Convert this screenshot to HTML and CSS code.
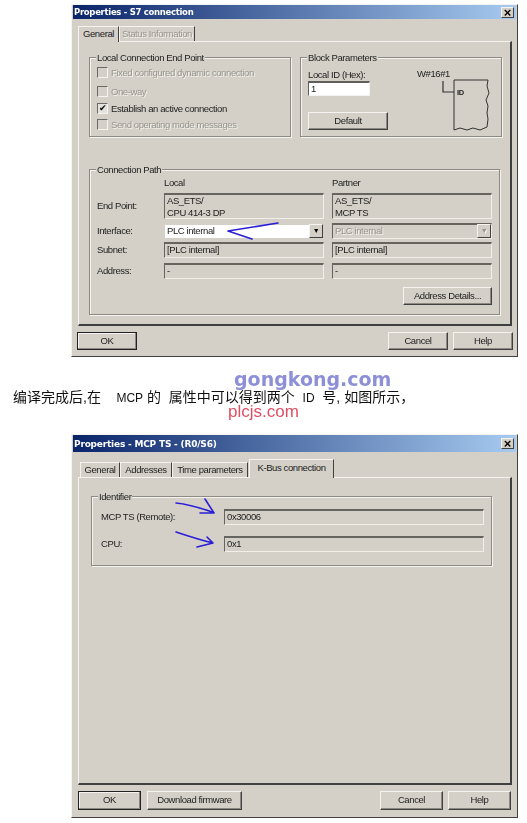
FILE: index.html
```html
<!DOCTYPE html>
<html lang="en">
<head>
  <meta charset="UTF-8" />
  <title>Properties</title>
  <link rel="stylesheet" href="styles.css">
</head>
<body>
  <div class="page">

    <div class="dialog dialog-s7">
      <div class="titlebar">
        <span>Properties - S7 connection</span>
        <span class="close">×</span>
      </div>
      <div class="tabs">
        <div class="tab active">General</div>
        <div class="tab off">Status Information</div>
      </div>
      <div class="panel">
        <div class="top-groups">
          <div class="group end-point">
            <div class="legend">Local Connection End Point</div>
            <div class="check off"><span class="box"></span>Fixed configured dynamic connection</div>
            <div class="check off"><span class="box"></span>One-way</div>
            <div class="check"><span class="box">✔</span>Establish an active connection</div>
            <div class="check off"><span class="box"></span>Send operating mode messages</div>
          </div>
          <div class="group block-params">
            <div class="legend">Block Parameters</div>
            <div class="block-body">
              <div class="block-form">
                <div class="block-label">Local ID (Hex):</div>
                <div class="input">1</div>
                <div class="btn default-btn">Default</div>
              </div>
              <svg class="block-pic" width="80" height="68" viewBox="0 0 80 68">
                <text x="1" y="12" class="pic-text">W#16#1</text>
                <path d="M27 16V27H38" class="pic-line" />
                <path d="M38 15H72L71 21L73 28L70 35L72 41L71 48L72 54L71 62L64 65L57 63L51 65L44 63L38 65Z" class="pic-line thin" />
                <text x="41" y="30" class="pic-text small">ID</text>
              </svg>
            </div>
          </div>
        </div>
        <div class="group path">
          <div class="legend">Connection Path</div>
          <div class="path-grid">
            <div></div>
            <div class="col-head">Local</div>
            <div class="col-head">Partner</div>

            <div class="row-label tall">End Point:</div>
            <div class="field tall">AS_ETS/<br>CPU 414-3 DP</div>
            <div class="field tall">AS_ETS/<br>MCP TS</div>

            <div class="row-label">Interface:</div>
            <div class="field white">PLC internal<span class="drop">▼</span></div>
            <div class="field off">PLC internal<span class="drop">▼</span></div>

            <div class="row-label">Subnet:</div>
            <div class="field">[PLC internal]</div>
            <div class="field">[PLC internal]</div>

            <div class="row-label">Address:</div>
            <div class="field">-</div>
            <div class="field">-</div>
          </div>
          <div class="btn details-btn">Address Details...</div>
        </div>
      </div>
      <div class="actions">
        <div class="btn primary">OK</div>
        <div class="spacer"></div>
        <div class="btn">Cancel</div>
        <div class="btn">Help</div>
      </div>
    </div>

    <p class="caption">编译完成后,在    <span class="latin">MCP</span> 的  属性中可以得到两个  <span class="latin">ID</span>  号, 如图所示，</p>

    <div class="dialog dialog-mcp">
      <div class="titlebar">
        <span>Properties - MCP TS - (R0/S6)</span>
        <span class="close">×</span>
      </div>
      <div class="tabs">
        <div class="tab">General</div>
        <div class="tab">Addresses</div>
        <div class="tab">Time parameters</div>
        <div class="tab active">K-Bus connection</div>
      </div>
      <div class="panel">
        <div class="group identifier">
          <div class="legend">Identifier</div>
          <div class="id-grid">
            <div class="row-label">MCP TS (Remote):</div>
            <div class="field">0x30006</div>
            <div class="row-label">CPU:</div>
            <div class="field">0x1</div>
          </div>
        </div>
      </div>
      <div class="actions">
        <div class="btn primary">OK</div>
        <div class="btn download">Download firmware</div>
        <div class="spacer"></div>
        <div class="btn">Cancel</div>
        <div class="btn">Help</div>
      </div>
    </div>

    <svg class="marks" width="527" height="823" viewBox="0 0 527 823">
      <path d="M278 223L228 231L252 239" />
      <path d="M176 503C186 504 198 507 212 512M205 499L214 513L200 513" />
      <path d="M176 532C188 536 200 540 213 543M197 547L213 543L207 537" />
    </svg>
    <div class="mark-gongkong">gongkong.com</div>
    <div class="mark-plcjs">plcjs.com</div>
  </div>
</body>
</html>
```

FILE: styles.css
```css
body {
  margin: 0;
  background-color: #fff;
  font-family: 'Liberation Sans', sans-serif;
  font-size: 9.5px;
  letter-spacing: -0.4px;
  color: #222;
}

.page {
  position: relative;
  width: 527px;
  height: 823px;
  overflow: hidden;
  padding-top: 4px;
  box-sizing: border-box;
  filter: blur(0.35px);
}

.dialog {
  width: 447px;
  margin-left: 71px;
  box-sizing: border-box;
  background-color: #d4d0c8;
  border: 1px solid #f4f3ef;
  border-right-color: #404040;
  border-bottom-color: #404040;
  padding: 0 1px;
}

.dialog-s7 {
  height: 353px;
}

.dialog-mcp {
  height: 384px;
}

.titlebar {
  height: 14px;
  padding: 0 1px;
  display: flex;
  justify-content: space-between;
  align-items: center;
  background: linear-gradient(90deg, #0a246a, #a6caf0);
  color: #fff;
  font-family: 'DejaVu Sans', sans-serif;
  font-weight: bold;
  font-size: 8.5px;
  letter-spacing: -0.3px;
}

.dialog-mcp .titlebar {
  height: 17px;
  font-size: 9px;
  letter-spacing: -0.2px;
}

.close {
  width: 13px;
  height: 11px;
  margin-right: 1px;
  background-color: #d4d0c8;
  border: 1px solid #f4f3ef;
  border-right-color: #404040;
  border-bottom-color: #404040;
  box-sizing: border-box;
  color: #000;
  font-family: 'Liberation Sans', sans-serif;
  font-size: 13px;
  letter-spacing: 0;
  line-height: 9px;
  text-align: center;
}

/* tabs */
.tabs {
  display: flex;
  height: 16px;
  margin-top: 6px;
  padding-left: 5px;
  align-items: flex-end;
}

.dialog-mcp .tabs {
  height: 18px;
  margin-top: 7px;
  padding-left: 7px;
}

.tab {
  height: 15px;
  line-height: 14px;
  box-sizing: border-box;
  white-space: nowrap;
  text-align: center;
  border-top: 1px solid #f4f3ef;
  border-left: 1px solid #f4f3ef;
  border-right: 1px solid #404040;
}

.tab.active {
  height: 16px;
  position: relative;
  z-index: 1;
  background-color: #d4d0c8;
  margin-bottom: -1px;
}

.dialog-mcp .tab.active {
  height: 19px;
  line-height: 15px;
  margin-left: 1px;
}

.dialog-s7 .tab.active {
  width: 41px;
}

.dialog-s7 .tab.off {
  width: 76px;
}

.dialog-mcp .tab:nth-child(1) {
  width: 40px;
}

.dialog-mcp .tab:nth-child(2) {
  width: 52px;
}

.dialog-mcp .tab:nth-child(3) {
  width: 76px;
}

.dialog-mcp .tab:nth-child(4) {
  width: 85px;
}

.off {
  color: #98958d;
  text-shadow: 1px 1px 0 #f4f3ef;
}

.panel {
  height: 285px;
  margin-left: 5px;
  width: 434px;
  box-sizing: border-box;
  padding: 15px 10px 0;
  border: 1px solid #f4f3ef;
  border-right: 2px solid #404040;
  border-bottom: 2px solid #404040;
}

.dialog-mcp .panel {
  height: 308px;
  padding: 18px 18px 0 12px;
}

/* groups */
.group {
  box-sizing: border-box;
  border: 1px solid #8d8a83;
  box-shadow: 1px 1px 0 #f4f3ef, inset 1px 1px 0 #f4f3ef;
}

.legend {
  display: table;
  height: 13px;
  line-height: 13px;
  margin: -7px 0 0 6px;
  padding: 0 1px;
  background-color: #d4d0c8;
}

.end-point .legend {
  margin-left: -1px;
}

.top-groups {
  display: grid;
  grid-template-columns: 202px 202px;
  column-gap: 9px;
  height: 80px;
  margin-bottom: 32px;
}

.end-point {
  padding-left: 7px;
}

.check {
  display: flex;
  align-items: center;
  height: 16px;
  white-space: nowrap;
}

.check:nth-child(3) {
  margin-top: 3px;
}

.check:nth-child(4) {
  margin-top: 1px;
}

.box {
  width: 11px;
  height: 11px;
  margin-right: 3px;
  box-sizing: border-box;
  border: 1px solid #6c6a65;
  border-right-color: #f4f3ef;
  border-bottom-color: #f4f3ef;
  background-color: #e4e2dc;
  font-size: 9px;
  line-height: 9px;
  color: #000;
  text-align: center;
  overflow: hidden;
}

.off .box {
  background-color: #d4d0c8;
}

/* block parameters */
.block-body {
  display: flex;
  justify-content: space-between;
  padding-left: 7px;
}

.block-form {
  width: 80px;
}

.block-label {
  height: 14px;
  line-height: 15px;
  margin-top: 3px;
}

.input {
  width: 62px;
  height: 15px;
  margin-bottom: 16px;
  padding-left: 2px;
  box-sizing: border-box;
  line-height: 12px;
  background-color: #fff;
  border: 1px solid #5f5e5a;
  border-width: 2px 1px 1px 1px;
  border-right-color: #f4f3ef;
  border-bottom-color: #f4f3ef;
}

.default-btn {
  width: 80px;
}

.block-pic {
  flex: none;
  margin: 1px 5px 0 0;
}

.pic-text {
  font-family: 'Liberation Sans', sans-serif;
  font-size: 9.5px;
  fill: #222;
}

.pic-text.small {
  font-size: 7.5px;
  font-weight: bold;
}

.pic-line {
  fill: none;
  stroke: #333;
  stroke-width: 1.2;
}

.pic-line.thin {
  stroke-width: 1;
}

/* connection path */
.path {
  height: 146px;
}

.path-grid {
  display: grid;
  grid-template-columns: 59px 160px 160px;
  grid-template-rows: 17px 30px 19px 21px 15px;
  column-gap: 8px;
  padding-left: 7px;
}

.col-head {
  line-height: 14px;
}

.row-label {
  height: 16px;
  line-height: 16px;
  white-space: nowrap;
}

.row-label.tall {
  height: 26px;
  line-height: 26px;
}

.field {
  position: relative;
  height: 16px;
  box-sizing: border-box;
  padding: 0 2px;
  line-height: 12px;
  border: 1px solid #f0efea;
  border-top: 2px solid #66645f;
  border-left: 1px solid #66645f;
}

.field.tall {
  height: 26px;
}

.field.white {
  background-color: #fff;
  border-color: #d4d0c8;
}

.field.off {
  background-color: #d4d0c8;
}

.drop {
  position: absolute;
  top: -1px;
  right: 0;
  width: 14px;
  height: 14px;
  box-sizing: border-box;
  background-color: #d4d0c8;
  border: 1px solid #f4f3ef;
  border-right-color: #404040;
  border-bottom-color: #404040;
  color: #000;
  font-size: 7px;
  line-height: 12px;
  text-align: center;
}

.off .drop {
  color: #98958d;
}

.details-btn {
  width: 89px;
  margin: 9px 0 0 313px;
}

/* identifier */
.identifier {
  height: 70px;
}

.id-grid {
  display: grid;
  grid-template-columns: 123px 260px;
  grid-template-rows: 16px 16px;
  row-gap: 11px;
  padding-left: 9px;
  margin-top: 6px;
}

/* buttons */
.btn {
  height: 18px;
  line-height: 16px;
  box-sizing: border-box;
  text-align: center;
  white-space: nowrap;
  background-color: #d4d0c8;
  border: 1px solid #f4f3ef;
  border-right-color: #404040;
  border-bottom-color: #404040;
  box-shadow: inset -1px -1px 0 #8d8a83;
}

.actions {
  display: flex;
  gap: 5px;
  padding: 6px 3px 0 4px;
}

.actions .btn {
  width: 60px;
}

.actions .primary {
  border: 1px solid #222;
  box-shadow: inset -1px -1px 0 #8d8a83, inset 1px 1px 0 #f4f3ef;
  margin-right: 1px;
}

.spacer {
  flex: 1;
}

.dialog-mcp .actions .btn {
  width: 63px;
  height: 19px;
}

.dialog-mcp .actions .download {
  width: 95px;
}

.dialog-mcp .actions {
  padding-left: 5px;
  padding-right: 5px;
}

/* caption between the two dialogs */
.caption {
  height: 77px;
  margin: 0 0 0 13px;
  padding-top: 32px;
  box-sizing: border-box;
  font-family: 'Liberation Sans', 'Noto Sans CJK SC', sans-serif;
  font-size: 14px;
  letter-spacing: 0;
  line-height: 16px;
  color: #111;
  white-space: pre;
}

.latin {
  font-size: 12px;
}

/* hand drawn arrows and watermarks sit over everything */
.marks {
  position: absolute;
  top: 0;
  left: 0;
}

.marks path {
  fill: none;
  stroke: #2a1fd6;
  stroke-width: 1.6;
  stroke-linecap: round;
  stroke-linejoin: round;
}

.mark-gongkong {
  position: absolute;
  top: 368px;
  left: 234px;
  font-family: 'DejaVu Sans', sans-serif;
  font-weight: bold;
  font-size: 19px;
  letter-spacing: 0;
  line-height: 22px;
  color: #8d90d6;
}

.mark-plcjs {
  position: absolute;
  top: 402px;
  left: 228px;
  font-family: 'Liberation Sans', sans-serif;
  font-size: 17px;
  letter-spacing: 0;
  line-height: 20px;
  color: #df4f62;
}
```
